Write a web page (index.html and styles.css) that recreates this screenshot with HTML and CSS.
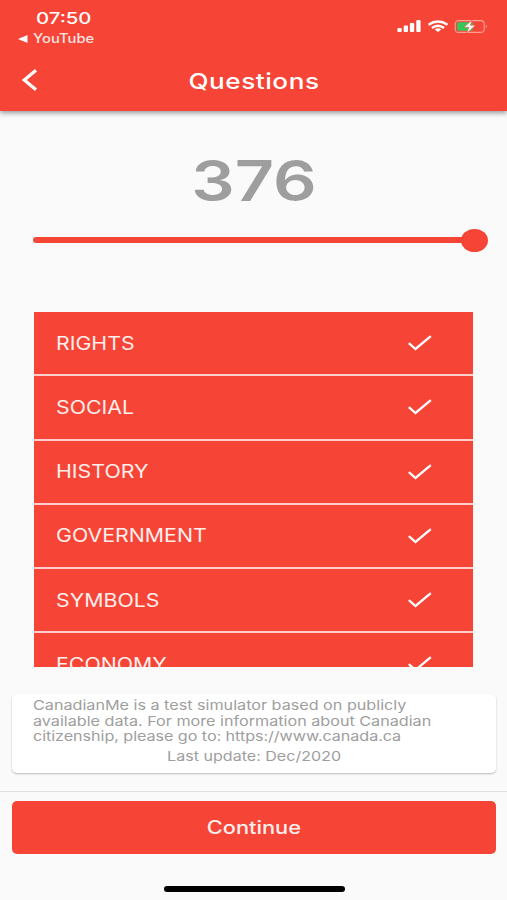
FILE: index.html
```html
<!DOCTYPE html>
<html lang="en">
<head>
<meta charset="utf-8">
<title>Questions</title>
<link rel="stylesheet" href="styles.css">
</head>
<body>
<div class="screen">
  <header class="header">
    <div class="status">
      <div class="status-left">
        <div class="time"><span class="wide">07:50</span></div>
        <div class="back-app">
          <svg width="10" height="8" viewBox="0 0 10 8"><path d="M0 4 9.500 0v8z" fill="#fff"/></svg>
          <span class="wide">YouTube</span>
        </div>
      </div>
      <svg class="status-icons" width="92" height="16" viewBox="0 0 92 16">
        <g fill="#fff">
          <rect x=".4" y="8" width="4.300" height="4" rx="1"/>
          <rect x="6.700" y="5.500" width="4.300" height="6.500" rx="1"/>
          <rect x="12.900" y="3" width="4.300" height="9" rx="1"/>
          <rect x="19.300" y="0" width="4.300" height="12" rx="1"/>
        </g>
        <g fill="none" stroke="#fff" stroke-width="2.400">
          <path d="M31.500 4.700Q41 -1.800 50.500 4.700"/>
          <path d="M34.900 8Q41 3.500 47.100 8"/>
        </g>
        <path d="M37.700 9.500Q41 7.100 44.300 9.500L41 12z" fill="#fff"/>
        <rect x="58.200" y=".6" width="29" height="11.800" rx="3.500" fill="none" stroke="#fb9f94" stroke-width="1.100"/>
        <path d="M88.800 4.400q2.200 2 0 4.200z" fill="#fb9f94"/>
        <rect x="60" y="2.300" width="16" height="8.500" rx="1.800" fill="#35c759"/>
        <path d="M75 0 67 7.300h4.900l-2.200 6 8.700-8h-5z" fill="#fff" stroke="#f64436" stroke-width=".5"/>
      </svg>
    </div>
    <div class="nav">
      <svg class="chevron" width="18" height="24" viewBox="0 0 18 24"><path d="M16 2.300 4.300 12l11.700 9.700" fill="none" stroke="#fff" stroke-width="3.200"/></svg>
      <h1 class="title"><span class="wide">Questions</span></h1>
    </div>
  </header>
  <main class="content">
    <div class="count"><span class="wide">376</span></div>
    <div class="slider"><div class="track"></div><div class="thumb"></div></div>
    <ul class="topics">
      <li><span class="wide">RIGHTS</span><svg class="check" viewBox="0 0 26 18"><path d="M1.800 9.200 8.500 15 23.800 2.200"/></svg></li>
      <li><span class="wide">SOCIAL</span><svg class="check" viewBox="0 0 26 18"><path d="M1.800 9.200 8.500 15 23.800 2.200"/></svg></li>
      <li><span class="wide">HISTORY</span><svg class="check" viewBox="0 0 26 18"><path d="M1.800 9.200 8.500 15 23.800 2.200"/></svg></li>
      <li><span class="wide">GOVERNMENT</span><svg class="check" viewBox="0 0 26 18"><path d="M1.800 9.200 8.500 15 23.800 2.200"/></svg></li>
      <li><span class="wide">SYMBOLS</span><svg class="check" viewBox="0 0 26 18"><path d="M1.800 9.200 8.500 15 23.800 2.200"/></svg></li>
      <li><span class="wide">ECONOMY</span><svg class="check" viewBox="0 0 26 18"><path d="M1.800 9.200 8.500 15 23.800 2.200"/></svg></li>
    </ul>
    <section class="card">
      <p class="about"><span class="wide">CanadianMe is a test simulator based on publicly<br>available data. For more information about Canadian<br><span class="link-line">citizenship, please go to: https://www.canada.ca</span></span></p>
      <p class="updated"><span class="wide">Last update: Dec/2020</span></p>
    </section>
  </main>
  <footer class="footer">
    <button class="continue"><span class="wide">Continue</span></button>
    <div class="home-bar"></div>
  </footer>
</div>
</body>
</html>
```
FILE: styles.css
```css
* { box-sizing: border-box; margin: 0; padding: 0; }
body { background: #fafafa; font-family: Inter, "Liberation Sans", sans-serif; overflow: hidden; }
svg { display: block; flex: none; }
.screen { width: 507px; height: 900px; display: flex; flex-direction: column; overflow: hidden; }
.wide { display: inline-block; transform: scaleX(1.2); transform-origin: left center; white-space: nowrap; }

.header { height: 111px; background: #f64436; color: #fff; box-shadow: 0 2px 5px rgba(0,0,0,.4); }
.status { height: 50px; display: flex; justify-content: space-between; padding: 8px 18px 0 18px; }
.time { padding-left: 18px; font-size: 16px; line-height: 20px; font-weight: 500; }
.time .wide { transform: scaleX(1.270); }
.back-app { display: flex; align-items: center; gap: 6px; font-size: 12.500px; line-height: 21px; font-weight: 500; color: #ffe4e0; }
.back-app .wide { transform: translateX(-1px) scaleX(1.180); }
.status-icons { margin: 12px 0 0; }
.nav { height: 60px; display: flex; align-items: center; padding-left: 20px; }
.title { flex: 1; margin: 1px 38px 0 0; text-align: center; font-size: 21.500px; line-height: 26px; font-weight: 500; }
.title .wide { transform: scaleX(1.215); letter-spacing: .45px; }
.title .wide, .count .wide, .updated .wide, .continue .wide { transform-origin: center; }

.content { display: flex; flex-direction: column; height: 680px; }
.count { margin-top: 36px; height: 68px; line-height: 68px; text-align: center; font-size: 56px; font-weight: 600; color: #9e9e9e; }
.count .wide { transform: translateX(.5px) scaleX(1.220); }
.slider { margin: 13px 19px 0 33px; height: 24px; display: flex; align-items: center; }
.track { flex: 1; height: 6.500px; border-radius: 4px 0 0 4px; background: #f64436; margin-right: -2px; }
.thumb { width: 27px; height: 23px; border-radius: 50%; background: #f64436; }
.topics { list-style: none; margin: 60px 33.600px 0 34.400px; height: 354.500px; overflow: hidden; }
.topics li { height: 64.250px; padding: 0 40.500px 0 22px; display: flex; align-items: center; justify-content: space-between; background: #f64436; border-bottom: 2px solid #fdd0cb; color: #ffefed; font-size: 18px; }
.topics .wide { transform: scaleX(1.185); }
.check { width: 26px; height: 18px; fill: none; stroke: #fff; stroke-width: 2.300; }
.card { margin: 27.500px 11px 0 12px; height: 79px; padding: 4px 21px 0 21px; border-radius: 5px; background: #fff; box-shadow: 0 1px 2px rgba(0,0,0,.25); color: #9e9e9e; font-size: 13.500px; }
.about { line-height: 15.500px; }
.about .wide { transform: scaleX(1.197); }
.link-line { letter-spacing: -.05px; }
.updated { line-height: 16px; margin-top: 3px; text-align: center; }
.updated .wide { transform: scaleX(1.190); }

.footer { height: 109px; border-top: 1px solid #dedede; padding: 9px 11px 0 12px; }
.continue { display: block; width: 100%; height: 53px; border: 0; border-radius: 5px; background: #f64436; color: #fff0ee; font: 500 18px/24px Inter, sans-serif; }
.continue .wide { transform: scaleX(1.210); }
.home-bar { width: 181px; height: 6px; margin: 32px auto 0; border-radius: 3px; background: #000; }
```
